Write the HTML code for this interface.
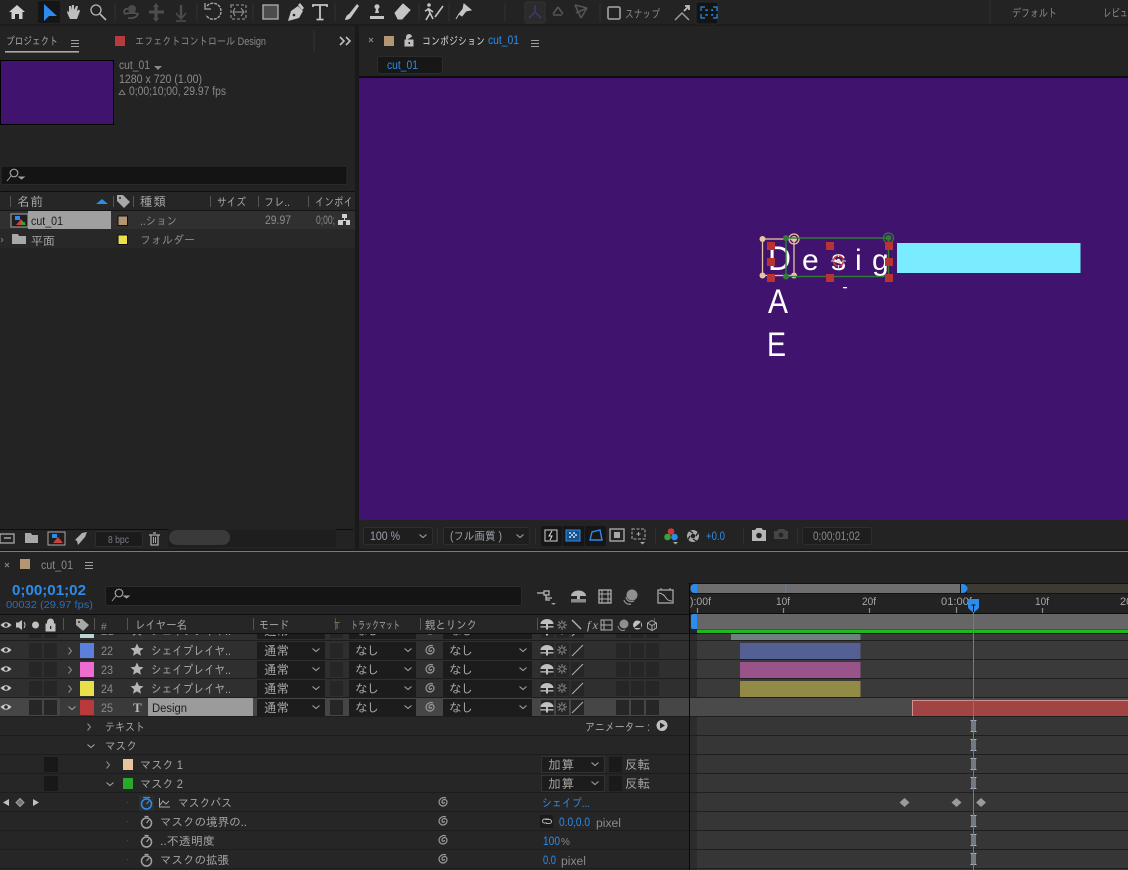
<!DOCTYPE html>
<html lang="ja"><head><meta charset="utf-8"><title>cut_01</title>
<style>
html,body{margin:0;padding:0;background:#232323;overflow:hidden}
svg{display:block}
text{font-family:"Liberation Sans","IPAGothic","Noto Sans CJK JP",sans-serif;font-size:11.5px;fill:#a6a6a6}
.b{fill:#2d8ceb}.d{fill:#8a8a8a}.k{fill:#1c1c1c}.w{fill:#d8d8d8}
.big{font-size:34px;fill:#fff}
.dim{fill:none;stroke:#555;stroke-width:1.6}
</style></head><body>
<svg xmlns="http://www.w3.org/2000/svg" width="1128" height="870" viewBox="0 0 1128 870">
<defs>
<g id="eye"><path d="M-5.5 0Q0-5.5 5.5 0Q0 5.5-5.5 0Z" fill="#c8c8c8"/><circle r="1.8" fill="#2a2a2a"/></g>
<g id="chd"><path d="M-3.5-1.5L0 1.5L3.5-1.5" fill="none" stroke="#a0a0a0" stroke-width="1.1"/></g>
<g id="chr"><path d="M-1.5-3.5L1.5 0L-1.5 3.5" fill="none" stroke="#8a8a8a" stroke-width="1.1"/></g>
<g id="star"><path d="M0-6.5L1.9-2.2 6.5-1.8 3 1.2 4 5.8 0 3.4-4 5.8-3 1.2-6.5-1.8-1.9-2.2Z" fill="#b5b5b5"/></g>
<g id="mush"><path d="M-6.5 0A6.5 5 0 0 1 6.5 0Z" fill="#c0c0c0"/><rect x="-1" y="0" width="2" height="5.5" fill="#c0c0c0"/><rect x="-6.5" y="2.2" width="13" height="1.3" fill="#c0c0c0"/></g>
<g id="sun"><circle r="2.3" fill="none" stroke="#8a8a8a"/><path d="M0-5V-3M0 3V5M-5 0H-3M3 0H5M-3.5-3.5L-2-2M3.5-3.5L2-2M-3.5 3.5L-2 2M3.5 3.5L2 2" stroke="#8a8a8a"/></g>
<g id="spi"><path d="M1.5 0A1.25 1.25 0 0 1 -1 0A2.5 2.5 0 0 1 4 0A4 4 0 0 1 -4 0A5 5 0 0 1 3 -4" fill="none" stroke="#9a9a9a" stroke-width="1.2"/></g>
<g id="sw"><circle cy="1" r="5" fill="none" stroke="#a0a0a0" stroke-width="1.5"/><path d="M-2-5.5H2M0 1L2.5-2" stroke="#a0a0a0" stroke-width="1.2"/></g>
<g id="ib"><path d="M-3-5.5H3M-3 5.5H3M-1.5-5.5V5.5M1.5-5.5V5.5" stroke="#a4b0be" stroke-width="1.1" fill="none"/></g>
<g id="kf"><path d="M0-4.5L5 0L0 4.5L-5 0Z" fill="#9a9a9a"/></g>
<g id="menu"><path d="M0 0.5H8M0 3.5H8M0 6.5H8" stroke="#a0a0a0"/></g>
<g id="sq"><rect x="-4" y="-4" width="8" height="8" fill="#b83434"/></g>
<g id="tn"><circle r="3" fill="#e8c39e"/></g>
<g id="gn"><circle r="3" fill="#2f7d34"/></g>
<g id="rowchrome">
<rect x="29" y="2" width="13" height="15" fill="#262626"/><rect x="44" y="2" width="13" height="15" fill="#262626"/>
<rect x="257" y="1" width="68" height="17" fill="#1c1c1c"/><rect x="330" y="2" width="13" height="15" fill="#262626"/>
<rect x="349" y="1" width="67" height="17" fill="#1c1c1c"/><rect x="443" y="1" width="89" height="17" fill="#1c1c1c"/>
<use href="#chd" x="316" y="9"/><use href="#chd" x="408" y="9"/><use href="#chd" x="523" y="9"/>
<use href="#spi" x="430" y="9"/>
<rect x="541" y="2" width="13" height="15" fill="#262626"/><rect x="556" y="2" width="13" height="15" fill="#262626"/><rect x="571" y="2" width="13" height="15" fill="#262626"/>
<use href="#mush" x="547" y="9"/><use href="#sun" x="562" y="9"/><path d="M572 15L583 4" stroke="#b0b0b0" stroke-width="1.1"/>
<rect x="616" y="2" width="13" height="15" fill="#262626"/><rect x="631" y="2" width="13" height="15" fill="#262626"/><rect x="646" y="2" width="13" height="15" fill="#262626"/>
</g>
</defs>

<!-- base -->
<rect width="1128" height="870" fill="#232323"/>
<!-- top toolbar -->
<rect y="24" width="1128" height="2" fill="#1b1b1b"/>
<path d="M9 12L17 5L25 12H22.5V19H19V14H15V19H11.5V12Z" fill="#cfcfcf"/>
<rect x="38" y="1" width="22" height="22" rx="2" fill="#151515"/>
<path d="M44 4V21L49 16L57 16Z" fill="#2d8ceb"/>
<path d="M70 19Q67 13 67 11L69 12V6H71V10L72 5H74V10L76 6H78L77 11L79 9.5L80 11L77 19Z" fill="#bdbdbd"/>
<circle cx="96" cy="10" r="5" fill="none" stroke="#b5b5b5" stroke-width="1.3"/><path d="M100 14L106 20" stroke="#b5b5b5" stroke-width="1.6"/>
<path d="M115 3V22M197 3V22M253 3V22M335 3V22M419 3V22M449 3V22M505 3V22M600 3V22M990 0V24" stroke="#2f2f2f" stroke-width="1.3"/>
<circle cx="132" cy="9" r="4" fill="#4a4a4a"/><path d="M124 13Q124 8 128 9M128 18Q136 19 138 14Q134 12 124 14" class="dim"/>
<path d="M156 5V20M149 12H164" stroke="#4d4d4d" stroke-width="3"/><path d="M153 7L156 3L159 7M153 18L156 22L159 18" fill="#4d4d4d"/>
<path d="M181 5V17" stroke="#4d4d4d" stroke-width="2.5"/><path d="M176 13L181 19L186 13M176 21H186" fill="none" stroke="#4d4d4d" stroke-width="1.5"/>
<path d="M207 6A8 8 0 1 1 206 15" fill="none" stroke="#a6a6a6" stroke-width="1.4" stroke-dasharray="3 1"/><path d="M205 3V9H211" fill="none" stroke="#a6a6a6" stroke-width="1.3"/>
<rect x="231" y="5" width="15" height="14" fill="none" stroke="#a0a0a0" stroke-dasharray="3 2"/><path d="M234 12H243M235 8L233 12L235 16M241 8L244 12L241 16" stroke="#a0a0a0" fill="none"/>
<rect x="263" y="5" width="15" height="14" fill="#4c4c4c" stroke="#b3b3b3" stroke-width="1.3"/>
<path d="M288 21L291 11L298 6L303 11L299 18ZM298 5L300 3L304 8L302 10" fill="#c5c5c5"/><circle cx="294" cy="15" r="1.3" fill="#232323"/>
<path d="M313 7V5H327V7M320 5V19M316.5 19.5H323.5" fill="none" stroke="#c5c5c5" stroke-width="1.8"/>
<path d="M345 20Q346 15 349 14L357 4L359 6L352 16Q350 20 345 20Z" fill="#c5c5c5"/>
<path d="M370 16H384V19H370ZM375 13L376 9A2.5 2.5 0 1 1 378 9L379 13Z" fill="#c5c5c5"/>
<path d="M395 13L403 4L410 10L402 19H398Z" fill="#c5c5c5" stroke="#c5c5c5"/>
<circle cx="429" cy="5" r="1.8" fill="#c5c5c5"/><path d="M428 8L430 13L426 20M430 13L433 19M425 11L429 9L433 12M435 17L443 6" stroke="#c5c5c5" stroke-width="1.6" fill="none"/>
<path d="M464 4L471 10L466 11L462 16L459 14L463 9ZM459 14L456 19" fill="#c5c5c5" stroke="#c5c5c5"/>
<rect x="525" y="2" width="20" height="21" rx="2" fill="#2b2b2b" stroke="#333"/>
<path d="M535 12V5M535 12L529 18M535 12L541 18" stroke="#3c3c78" stroke-width="1.3"/>
<path d="M553 14L558 7M558 7L563 14M553 15H562" class="dim"/>
<path d="M575 5L581 18M576 13L587 8M575 5L587 8M581 18L587 8" class="dim"/>
<rect x="608" y="7" width="12" height="12" rx="1.5" fill="none" stroke="#969696" stroke-width="1.8"/>
<text x="625" y="18" textLength="35" lengthAdjust="spacingAndGlyphs" class="d">スナップ</text>
<path d="M675 20L682 13L689 20" fill="none" stroke="#9a9a9a" stroke-width="1.5"/><path d="M684 11L689 6M685 6H689V10" stroke="#bdbdbd" stroke-width="1.8" fill="none"/>
<rect x="696" y="2" width="22" height="22" rx="2" fill="#141414" stroke="#2a2a2a"/>
<path d="M701 11V7H705M713 7H717V11M701 14V18H705M713 18H717V14M706 11V10H708M711 10H712.5V11M706 14V15H708M711 15H712.5V14" fill="none" stroke="#2d8ceb" stroke-width="1.2"/>
<text x="1012" y="17" textLength="45" lengthAdjust="spacingAndGlyphs" class="d">デフォルト</text>
<text x="1103" y="17" textLength="25" lengthAdjust="spacingAndGlyphs" class="d">レビュ</text>

<!-- panel divider -->
<rect x="355" y="26" width="4" height="523" fill="#1a1a1a"/>

<!-- project panel tabs -->
<text x="6" y="45" textLength="52" lengthAdjust="spacingAndGlyphs" style="font-size:11px">プロジェクト</text>
<rect x="5" y="51" width="74" height="1.6" fill="#aaa"/>
<use href="#menu" x="71" y="40"/>
<rect x="115" y="36" width="10" height="10" fill="#b83a3a"/>
<text x="135" y="45" textLength="131" lengthAdjust="spacingAndGlyphs" class="d" style="font-size:11px">エフェクトコントロール Design</text>
<path d="M314 30V52" stroke="#333"/>
<path d="M340 37L344 41L340 45M346 37L350 41L346 45" fill="none" stroke="#bdbdbd" stroke-width="1.6"/>

<!-- project info -->
<rect x="0.5" y="60.5" width="113" height="64" fill="#40146e" stroke="#000"/>
<text x="119" y="69" class="d" textLength="31" lengthAdjust="spacingAndGlyphs">cut_01</text><path d="M154 66H162L158 70Z" fill="#8a8a8a"/>
<text x="119" y="83" class="d" textLength="83" lengthAdjust="spacingAndGlyphs">1280 x 720 (1.00)</text>
<path d="M119 94.5L122 90L125 94.5Z" fill="none" stroke="#8a8a8a" stroke-width=".8"/>
<text x="129" y="95" class="d" textLength="97" lengthAdjust="spacingAndGlyphs">0;00;10;00, 29.97 fps</text>

<!-- project search -->
<rect x="1" y="166" width="346" height="18.5" rx="2" fill="#141414" stroke="#2b2b2b"/>
<circle cx="14" cy="173" r="3.8" fill="none" stroke="#a0a0a0" stroke-width="1.2"/><path d="M11 176L7 181M19 177H24L21.5 179Z" stroke="#a0a0a0" fill="#a0a0a0"/>

<!-- project list -->
<rect y="191" width="355" height="1" fill="#0f0f0f"/>
<rect y="192" width="355" height="18" fill="#262626"/>
<rect y="210" width="355" height="1" fill="#151515"/>
<rect y="211" width="355" height="18" fill="#303030"/>
<rect y="229" width="355" height="19" fill="#282828"/>
<path d="M10.5 196V207M113.5 196V207M133.5 196V207M210.5 196V207M258.5 196V207M308.5 196V207" stroke="#555"/>
<text x="17" y="206" textLength="26" style="font-size:12.5px">名前</text>
<path d="M96 204L102 199L108 204Z" fill="#2d8ceb"/>
<path d="M117 195H123L130 202L124 208L117 201Z" fill="#a8a8a8"/><circle cx="120" cy="198" r="1" fill="#262626"/>
<text x="140" y="206" textLength="26" style="font-size:12.5px">種類</text>
<text x="217" y="206" textLength="29" lengthAdjust="spacingAndGlyphs">サイズ</text>
<text x="264" y="206" textLength="26" lengthAdjust="spacingAndGlyphs">フレ..</text>
<text x="315" y="206" textLength="38" lengthAdjust="spacingAndGlyphs">インポイ</text>
<rect x="11" y="214" width="17" height="13" fill="#1e1e1e" stroke="#a8a8a8"/><rect x="15" y="216" width="5" height="4" fill="#2d8ceb"/><path d="M16 225L21 219L26 225Z" fill="#cc4040"/><rect x="21" y="222" width="4" height="3" fill="#3aa03a"/>
<rect x="28" y="211" width="83" height="18" fill="#a0a0a0"/>
<text x="31" y="225" class="k" textLength="32" lengthAdjust="spacingAndGlyphs">cut_01</text>
<rect x="118" y="216" width="9.5" height="9.5" fill="#b39672" stroke="#111"/>
<text x="140" y="225" class="d" textLength="37" lengthAdjust="spacingAndGlyphs">..ション</text>
<text x="265" y="224" class="d" textLength="26" lengthAdjust="spacingAndGlyphs">29.97</text>
<text x="316" y="224" class="d" textLength="19" lengthAdjust="spacingAndGlyphs">0;00;</text>
<path d="M342 214H347V218H345V220H350V225H346V221H343V225H338V220H344V218H342Z" fill="#cfcfcf"/>
<path d="M1 238L3 240L1 242" fill="none" stroke="#777"/>
<path d="M12 234H18L19 236H26V244H12Z" fill="#a8a8a8"/>
<text x="31" y="245" textLength="24" style="font-size:12px">平面</text>
<rect x="118" y="235" width="9.5" height="9.5" fill="#e9df4a" stroke="#111"/>
<text x="140" y="244" class="d" textLength="55" lengthAdjust="spacingAndGlyphs">フォルダー</text>

<!-- project footer -->
<rect y="529" width="168" height="1" fill="#0d0d0d"/><rect x="336" y="529" width="17" height="1" fill="#0d0d0d"/>
<rect x="168" y="530" width="168" height="17" fill="#1e1e1e"/>
<rect x="0" y="534" width="14" height="9" fill="none" stroke="#a8a8a8" stroke-width="1.3"/><path d="M4 538H11" stroke="#a8a8a8" stroke-width="1.5"/>
<path d="M25 533H31L32 535H38V543H25Z" fill="#a8a8a8"/>
<rect x="48" y="532" width="17" height="13" fill="#1e1e1e" stroke="#a8a8a8"/><rect x="52" y="534" width="5" height="4" fill="#2d8ceb"/><path d="M53 543L58 537L63 543Z" fill="#cc4040"/>
<path d="M75 540L82 533L87 532L85 537L78 545L77 541Z" fill="#b0b0b0"/>
<rect x="95.5" y="531.5" width="47" height="15" rx="2" fill="#1b1b1b" stroke="#2e2e2e"/>
<text x="108" y="543" textLength="21" lengthAdjust="spacingAndGlyphs" style="font-size:10px;fill:#7c7c8a">8 bpc</text>
<path d="M149 535H160M151 535V545H158V535M153 533H156" fill="none" stroke="#a8a8a8" stroke-width="1.3"/><path d="M153.5 537V543M155.5 537V543" stroke="#a8a8a8"/>
<rect x="169" y="530" width="61" height="15" rx="7.5" fill="#3a3a3a"/>

<!-- comp tabs -->
<path d="M369 38L373 42M373 38L369 42" stroke="#888"/>
<rect x="384" y="36" width="10" height="10" fill="#b39672"/>
<path d="M405 40H413V46H405ZM406.5 40V37A2.5 2.5 0 0 1 411.5 37" fill="#bdbdbd" stroke="#bdbdbd"/><rect x="408.5" y="42" width="1.5" height="2" fill="#232323"/>
<text x="422" y="45" textLength="63" lengthAdjust="spacingAndGlyphs" class="w" style="font-size:11px">コンポジション</text>
<text x="488" y="44" textLength="31" lengthAdjust="spacingAndGlyphs" class="b">cut_01</text>
<use href="#menu" x="531" y="40"/>
<rect x="377.5" y="56.5" width="65" height="17" rx="2" fill="#171717" stroke="#2b2b2b"/>
<text x="387" y="69" textLength="31" lengthAdjust="spacingAndGlyphs" class="b">cut_01</text>
<rect x="359" y="76" width="769" height="2" fill="#0c0c0c"/>

<!-- viewer -->
<rect x="359" y="78" width="769" height="442" fill="#40146e"/>
<rect x="897" y="243" width="183.5" height="30" fill="#7aecff"/>
<text x="768" y="270" class="big" textLength="23" lengthAdjust="spacingAndGlyphs">D</text>
<text x="802" y="270" class="big" style="font-size:30px">e</text>
<text x="831" y="270" class="big" style="font-size:30px">s</text>
<text x="855" y="270" class="big" style="font-size:30px">i</text>
<text x="872" y="270" class="big" style="font-size:30px">g</text>
<text x="768" y="313" class="big" textLength="20" lengthAdjust="spacingAndGlyphs">A</text>
<text x="767" y="356" class="big" textLength="19" lengthAdjust="spacingAndGlyphs">E</text>
<rect x="843" y="287" width="4" height="1.3" fill="#fff"/>
<rect x="762.5" y="239" width="31.5" height="36.5" fill="none" stroke="#e8c39e" stroke-width="1.3"/>
<use href="#tn" x="762.5" y="239"/><use href="#tn" x="762.5" y="275.5"/><use href="#tn" x="794" y="275.5"/><use href="#tn" x="794" y="239"/>
<circle cx="794" cy="239" r="5" fill="none" stroke="#e8c39e" stroke-width="1.3"/>
<rect x="786" y="238" width="102.5" height="38.5" fill="none" stroke="#2f7d34" stroke-width="1.4"/>
<use href="#gn" x="786" y="238"/><use href="#gn" x="786" y="276.5"/><use href="#gn" x="888.5" y="238"/>
<circle cx="888.5" cy="238" r="5" fill="none" stroke="#2f7d34" stroke-width="1.3"/>
<use href="#sq" x="771" y="246"/><use href="#sq" x="830" y="246"/><use href="#sq" x="889" y="246"/>
<use href="#sq" x="771" y="262"/><use href="#sq" x="889" y="262"/>
<use href="#sq" x="771" y="278"/><use href="#sq" x="830" y="278"/><use href="#sq" x="889" y="278"/>
<circle cx="838.5" cy="261" r="5" fill="none" stroke="#c83a3a" stroke-width="1.6"/><circle cx="838.5" cy="261" r="2.2" fill="#ddd"/>
<path d="M831 261H835M842 261H846M838.5 254V257M838.5 265V268" stroke="#e0d0d0"/>

<!-- comp footer -->
<rect x="359" y="520" width="769" height="29" fill="#232323"/>
<rect x="363.5" y="527.5" width="69" height="17" rx="2" fill="#1e1e1e" stroke="#2e2e2e"/>
<text x="370" y="540" textLength="30" lengthAdjust="spacingAndGlyphs" style="fill:#9aa0aa">100 %</text><use href="#chd" x="423" y="536"/>
<path d="M437.5 528V544M535.5 528V544M655.5 528V544M743.5 528V544M797.5 528V544" stroke="#303030"/>
<rect x="443.5" y="527.5" width="86" height="17" rx="2" fill="#1e1e1e" stroke="#2e2e2e"/>
<text x="450" y="540" textLength="52" lengthAdjust="spacingAndGlyphs" style="fill:#9aa0aa">(フル画質 )</text><use href="#chd" x="520" y="536"/>
<rect x="541" y="526" width="21" height="20" rx="2" fill="#161616"/>
<rect x="545" y="530" width="12" height="11" fill="none" stroke="#b5b5b5" stroke-width="1.2"/><path d="M552 531L549 536H552L550 540" stroke="#dcdcdc" fill="none"/>
<rect x="563" y="526" width="21" height="20" rx="2" fill="#161616"/>
<rect x="566" y="530" width="14" height="11" fill="#1d4f82" stroke="#2d8ceb"/><path d="M569 532H571V534H569ZM573 532H575V534H573ZM571 534H573V536H571ZM575 534H577V536H575ZM569 536H571V538H569ZM573 536H575V538H573Z" fill="#8fc4f5"/>
<rect x="585" y="526" width="21" height="20" rx="2" fill="#161616"/>
<path d="M590 540L592 532L600 530L602 540Z" fill="none" stroke="#2d8ceb" stroke-width="1.4"/>
<rect x="610" y="529" width="14" height="12" fill="none" stroke="#a8a8a8" stroke-width="1.4"/><rect x="614" y="532" width="6" height="6" fill="#a8a8a8"/>
<rect x="632" y="529" width="13" height="10" fill="none" stroke="#a8a8a8" stroke-dasharray="3 1.5"/><path d="M638.5 532V536M636.5 534H640.5" stroke="#a8a8a8"/><path d="M640 542H645L642.5 544.5Z" fill="#a8a8a8"/>
<circle cx="671" cy="531.5" r="3.3" fill="#c83a3a"/><circle cx="667.5" cy="537" r="3.3" fill="#3aa03a"/><circle cx="674.5" cy="537" r="3.3" fill="#2d8ceb"/><path d="M673 542H678L675.5 544.5Z" fill="#a8a8a8"/>
<circle cx="693" cy="536" r="6" fill="#a8a8a8"/><path d="M693 533L688 530M696 536L699 531M693 539L698 542M690 536L687 541" stroke="#232323" stroke-width="1.3"/><circle cx="693" cy="536" r="2.3" fill="#232323"/>
<text x="706" y="540" textLength="19" lengthAdjust="spacingAndGlyphs" class="b">+0.0</text>
<path d="M752 530H755L756.5 528H761.5L763 530H766V541H752Z" fill="#b5b5b5"/><circle cx="759" cy="535.5" r="2.8" fill="#232323"/>
<path d="M774 531H777L779 529H784L786 531H788V539H774Z" fill="#454545"/><circle cx="781" cy="535" r="2.3" fill="#232323"/>
<rect x="802.5" y="527.5" width="69" height="17" rx="2" fill="#1e1e1e" stroke="#2e2e2e"/>
<text x="813" y="540" textLength="47" lengthAdjust="spacingAndGlyphs" style="fill:#8a8a8a">0;00;01;02</text>

<!-- divider & timeline panel -->
<rect y="549" width="1128" height="2" fill="#1a1a1a"/>
<rect y="551" width="1128" height="1" fill="#2d8ceb"/>
<path d="M5 563L9 567M9 563L5 567" stroke="#888"/>
<rect x="20" y="559" width="10" height="10" fill="#b39672"/>
<text x="41" y="569" textLength="32" lengthAdjust="spacingAndGlyphs" class="d">cut_01</text>
<use href="#menu" x="85" y="562"/>
<text x="12" y="595" textLength="74" lengthAdjust="spacingAndGlyphs" class="b" style="font-size:14.5px;font-weight:bold">0;00;01;02</text>
<text x="6" y="608" textLength="87" lengthAdjust="spacingAndGlyphs" style="fill:#2d6db5;font-size:10.5px">00032 (29.97 fps)</text>
<rect x="105.5" y="586.5" width="416" height="19" rx="2" fill="#141414" stroke="#2b2b2b"/>
<circle cx="119" cy="593" r="3.8" fill="none" stroke="#a0a0a0" stroke-width="1.2"/><path d="M116 596L112 601M124 596H129L126.5 598Z" stroke="#a0a0a0" fill="#a0a0a0"/>
<path d="M537 593H544M544 591H549V595H544ZM546 595V600H550M546 598H552" stroke="#bdbdbd" stroke-width="1.2" fill="none"/><path d="M551 603H556L553.5 605Z" fill="#a0a0a0"/>
<path d="M571 596A7.5 5.5 0 0 1 586 596Z" fill="#b5b5b5"/><rect x="577" y="596" width="3" height="5" fill="#b5b5b5"/><rect x="571" y="599" width="15" height="3.5" fill="#8a8a8a"/>
<rect x="599" y="590" width="12" height="13" fill="none" stroke="#b0b0b0" stroke-width="1.3"/><path d="M602 590V603M608 590V603M599 594H611M599 599H611" stroke="#b0b0b0"/>
<circle cx="632" cy="595" r="5.5" fill="#8f8f8f"/><path d="M626 597A5.5 5.5 0 0 0 634 601M624 600A5.5 5.5 0 0 0 631 604" fill="none" stroke="#8f8f8f" stroke-width="1.2"/>
<rect x="658" y="590" width="15" height="13" fill="none" stroke="#b0b0b0" stroke-width="1.2"/><path d="M659 593Q664 594 666 598Q668 601 672 601" fill="none" stroke="#b0b0b0"/><path d="M661 588V590M670 588V590" stroke="#b0b0b0"/>

<!-- timeline ruler -->
<rect x="690" y="583" width="438" height="31" fill="#232323"/>
<rect x="690" y="583" width="438" height="1" fill="#111"/>
<rect x="697" y="584" width="263" height="9" fill="#6e6e6e"/>
<rect x="967" y="584" width="161" height="9" fill="#3d3a33"/>
<path d="M697 584H694A4 4 0 0 0 690.5 588.5A4 4 0 0 0 694 593H697Z" fill="#2d8ceb"/>
<path d="M961 584H963A4.5 4.5 0 0 1 963 593H961Z" fill="#2d8ceb"/>
<rect x="960" y="584" width="1" height="9" fill="#111"/>
<rect x="785" y="584" width="1.5" height="9" fill="#5f7b9a"/>
<rect x="690" y="593" width="438" height="1" fill="#111"/>
<text x="690" y="605" textLength="21" lengthAdjust="spacingAndGlyphs" style="font-size:11px">):00f</text>
<text x="776" y="605" textLength="14" lengthAdjust="spacingAndGlyphs" style="font-size:11px">10f</text>
<text x="862" y="605" textLength="14" lengthAdjust="spacingAndGlyphs" style="font-size:11px">20f</text>
<text x="941" y="605" textLength="31" lengthAdjust="spacingAndGlyphs" style="font-size:11px">01:00f</text>
<text x="1035" y="605" textLength="14" lengthAdjust="spacingAndGlyphs" style="font-size:11px">10f</text>
<text x="1120" y="605" style="font-size:11px">20</text>
<path d="M697.5 608V613M783.5 608V613M869.5 608V613M956.5 607V613M1042.5 608V613" stroke="#8a8a8a" stroke-width="1.2"/>
<rect x="690" y="613" width="438" height="1" fill="#0d0d0d"/>
<rect x="690" y="614" width="7" height="15" fill="#232323"/>
<rect x="697" y="614" width="431" height="15" fill="#666"/>
<path d="M697 614H693A2 2 0 0 0 691 616V627A2 2 0 0 0 693 629H697Z" fill="#2d8ceb"/>
<rect x="697" y="629.5" width="431" height="3.5" fill="#1fb81f"/>

<!-- layer header -->
<rect y="614" width="689" height="1" fill="#0f0f0f"/>
<rect y="615" width="689" height="18" fill="#262626"/>
<rect y="633" width="1128" height="1.2" fill="#0f0f0f"/>
<rect x="689" y="583" width="1" height="287" fill="#0a0a0a"/>
<use href="#eye" x="6" y="625"/>
<path d="M16 622.5H18.5L22 620V630L18.5 627.5H16Z" fill="#c0c0c0"/><path d="M24 622Q26 625 24 628" fill="none" stroke="#c0c0c0"/>
<circle cx="35.5" cy="625" r="3.5" fill="#c0c0c0"/>
<path d="M46 624H55V631H46ZM47.5 624V622A3 3 0 0 1 53.5 622V624" fill="#c0c0c0" stroke="#c0c0c0"/><rect x="50" y="626" width="1.3" height="3" fill="#262626"/>
<path d="M76 619H82L89 625L83 631L76 625Z" fill="#a8a8a8"/><circle cx="79" cy="622" r="1" fill="#262626"/>
<text x="101" y="630" textLength="10" style="font-size:10px;fill:#8a8a8a">#</text>
<path d="M63.5 618V630M94.5 618V630M127.5 618V630M253.5 618V630M335.5 618V630M420.5 618V630M537.5 618V630M654.5 618V630" stroke="#555"/>
<text x="135" y="629" textLength="52" lengthAdjust="spacingAndGlyphs">レイヤー名</text>
<text x="259" y="629" textLength="30" lengthAdjust="spacingAndGlyphs">モード</text>
<text x="334" y="629" textLength="8" style="font-size:10px;fill:#8a7a5a">T</text>
<text x="351" y="629" textLength="49" lengthAdjust="spacingAndGlyphs" style="font-size:11px">トラックマット</text>
<text x="425" y="629" textLength="52" lengthAdjust="spacingAndGlyphs">親とリンク</text>
<use href="#mush" x="547" y="624"/><use href="#sun" x="562" y="625"/>
<path d="M572 620L581 629" stroke="#b5b5b5" stroke-width="1.3"/>
<text x="587" y="629" textLength="11" style="font-style:italic;font-family:'Liberation Serif',serif;font-size:12px;fill:#b5b5b5">fx</text>
<rect x="601" y="620" width="11" height="10" fill="none" stroke="#b0b0b0"/><path d="M604 620V630M601 625H612" stroke="#b0b0b0"/>
<circle cx="624" cy="624" r="4.5" fill="#8f8f8f"/><path d="M618 626A5 5 0 0 0 625 630" fill="none" stroke="#8f8f8f"/>
<circle cx="637.5" cy="625" r="4.5" fill="#c0c0c0"/><path d="M634 628L641 622V628Z" fill="#262626"/>
<path d="M652 620.5L656.5 623V628L652 630.5L647.5 628V623ZM647.5 623L652 625.5L656.5 623M652 625.5V630.5" fill="none" stroke="#a8a8a8"/>

<!-- layer rows left -->
<rect y="634" width="689" height="6.5" fill="#2f2f2f"/>
<rect y="641" width="689" height="18" fill="#2f2f2f"/>
<rect y="660" width="689" height="18" fill="#2f2f2f"/>
<rect y="679" width="689" height="18" fill="#2f2f2f"/>
<rect y="698" width="689" height="18" fill="#464646"/>
<path d="M0 640.5H689M0 659.5H689M0 678.5H689M0 697.5H689M0 716.5H689" stroke="#1d1d1d"/>
<rect x="0" y="717" width="689" height="153" fill="#262626"/>
<path d="M0 735.5H689M0 754.5H689M0 773.5H689M0 792.5H689M0 811.5H689M0 830.5H689M0 849.5H689M0 868.5H689" stroke="#1d1d1d"/>

<!-- partial row 21 -->
<svg x="0" y="634" width="689" height="6.5" overflow="hidden">
<g transform="translate(0,-13)"><use href="#rowchrome"/>
<rect x="80" y="2" width="14" height="15" fill="#b8d4d4"/><use href="#star" x="137" y="9"/>
<text x="151" y="14" textLength="80" lengthAdjust="spacingAndGlyphs" style="font-size:12px">シェイプレイヤ..</text>
<text x="101" y="14" class="d">21</text><text x="264" y="14" textLength="25" style="font-size:12.5px">通常</text><text x="355" y="14" textLength="24" style="font-size:12.5px">なし</text><text x="449" y="14" textLength="24" style="font-size:12.5px">なし</text>
</g></svg>

<!-- row 22 -->
<g transform="translate(0,641)"><use href="#rowchrome"/><use href="#eye" x="6" y="9"/><use href="#chr" x="70" y="10"/>
<rect x="80" y="2" width="14" height="15" fill="#5a7fdc"/><use href="#star" x="137" y="9"/>
<text x="101" y="14" class="d" textLength="12" lengthAdjust="spacingAndGlyphs">22</text>
<text x="151" y="14" textLength="80" lengthAdjust="spacingAndGlyphs" style="font-size:12px">シェイプレイヤ..</text>
<text x="264" y="14" textLength="25" style="font-size:12.5px">通常</text><text x="355" y="14" textLength="24" style="font-size:12.5px">なし</text><text x="449" y="14" textLength="24" style="font-size:12.5px">なし</text></g>
<!-- row 23 -->
<g transform="translate(0,660)"><use href="#rowchrome"/><use href="#eye" x="6" y="9"/><use href="#chr" x="70" y="10"/>
<rect x="80" y="2" width="14" height="15" fill="#ec6cd0"/><use href="#star" x="137" y="9"/>
<text x="101" y="14" class="d" textLength="12" lengthAdjust="spacingAndGlyphs">23</text>
<text x="151" y="14" textLength="80" lengthAdjust="spacingAndGlyphs" style="font-size:12px">シェイプレイヤ..</text>
<text x="264" y="14" textLength="25" style="font-size:12.5px">通常</text><text x="355" y="14" textLength="24" style="font-size:12.5px">なし</text><text x="449" y="14" textLength="24" style="font-size:12.5px">なし</text></g>
<!-- row 24 -->
<g transform="translate(0,679)"><use href="#rowchrome"/><use href="#eye" x="6" y="9"/><use href="#chr" x="70" y="10"/>
<rect x="80" y="2" width="14" height="15" fill="#e9df4a"/><use href="#star" x="137" y="9"/>
<text x="101" y="14" class="d" textLength="12" lengthAdjust="spacingAndGlyphs">24</text>
<text x="151" y="14" textLength="80" lengthAdjust="spacingAndGlyphs" style="font-size:12px">シェイプレイヤ..</text>
<text x="264" y="14" textLength="25" style="font-size:12.5px">通常</text><text x="355" y="14" textLength="24" style="font-size:12.5px">なし</text><text x="449" y="14" textLength="24" style="font-size:12.5px">なし</text></g>
<!-- row 25 -->
<g transform="translate(0,698)"><rect x="60" y="0" width="88" height="18" fill="#3a3a3a"/><use href="#rowchrome"/><use href="#eye" x="6" y="9"/><use href="#chd" x="72" y="10"/>
<rect x="80" y="2" width="14" height="15" fill="#b83a3a"/>
<text x="133" y="14" style="font-family:'Liberation Serif',serif;font-weight:bold;font-size:13px;fill:#b5b5b5">T</text>
<text x="101" y="14" class="d" textLength="12" lengthAdjust="spacingAndGlyphs">25</text>
<rect x="148" y="0" width="105" height="18" fill="#9b9b9b"/>
<text x="152" y="14" textLength="35" lengthAdjust="spacingAndGlyphs" class="k">Design</text>
<text x="264" y="14" textLength="25" style="font-size:12.5px">通常</text><text x="355" y="14" textLength="24" style="font-size:12.5px">なし</text><text x="449" y="14" textLength="24" style="font-size:12.5px">なし</text></g>

<!-- property rows -->
<use href="#chr" x="89" y="727"/>
<text x="105" y="731" textLength="40" lengthAdjust="spacingAndGlyphs">テキスト</text>
<text x="585" y="731" textLength="65" lengthAdjust="spacingAndGlyphs">アニメーター :</text>
<circle cx="662" cy="725.5" r="5.5" fill="#c0c0c0"/><path d="M660 722.5L665 725.5L660 728.5Z" fill="#262626"/>
<use href="#chd" x="91" y="746"/>
<text x="105" y="750" textLength="32" lengthAdjust="spacingAndGlyphs">マスク</text>
<rect x="44" y="757" width="14" height="15" fill="#181818"/>
<use href="#chr" x="108" y="765"/>
<rect x="123" y="759" width="10" height="11" fill="#e8c39e"/>
<text x="140" y="769" textLength="43" lengthAdjust="spacingAndGlyphs">マスク 1</text>
<rect x="541.5" y="756.5" width="63" height="16" fill="#1c1c1c" stroke="#333"/>
<text x="548" y="769" textLength="26" style="font-size:12.5px">加算</text><use href="#chd" x="595" y="764"/>
<rect x="609" y="757" width="13" height="15" fill="#1a1a1a"/>
<text x="625" y="769" textLength="25" style="font-size:12.5px">反転</text>

<rect x="44" y="776" width="14" height="15" fill="#181818"/>
<use href="#chd" x="110" y="784"/>
<rect x="123" y="778" width="10" height="11" fill="#2ba82b"/>
<text x="140" y="788" textLength="43" lengthAdjust="spacingAndGlyphs">マスク 2</text>
<rect x="541.5" y="775.5" width="63" height="16" fill="#1c1c1c" stroke="#333"/>
<text x="548" y="788" textLength="26" style="font-size:12.5px">加算</text><use href="#chd" x="595" y="783"/>
<rect x="609" y="776" width="13" height="15" fill="#1a1a1a"/>
<text x="625" y="788" textLength="25" style="font-size:12.5px">反転</text>

<path d="M9 799V806L3 802.5Z" fill="#c0c0c0"/>
<path d="M20 798.5L24 802.5L20 806.5L16 802.5Z" fill="#777" stroke="#a0a0a0"/>
<path d="M33 799V806L39 802.5Z" fill="#c0c0c0"/>
<circle cx="127.5" cy="802.5" r=".8" fill="#444"/><circle cx="127.5" cy="821.5" r=".8" fill="#444"/><circle cx="127.5" cy="840.5" r=".8" fill="#444"/><circle cx="127.5" cy="859.5" r=".8" fill="#444"/>
<rect x="139" y="795" width="15" height="16" fill="#2d2d2d"/>
<circle cx="146.5" cy="804" r="5" fill="none" stroke="#2d8ceb" stroke-width="1.5"/><path d="M143 797.5H150M146.5 804L149 801" stroke="#2d8ceb" stroke-width="1.2"/>
<path d="M159.5 798V807H170M160 805L163 801L166 804L169 801" fill="none" stroke="#a8a8a8"/>
<text x="178" y="807" textLength="54" lengthAdjust="spacingAndGlyphs">マスクパス</text>
<use href="#sw" x="146.5" y="822"/>
<text x="160" y="826" textLength="87" lengthAdjust="spacingAndGlyphs">マスクの境界の..</text>
<use href="#sw" x="146.5" y="841"/>
<text x="160" y="845" textLength="55" lengthAdjust="spacingAndGlyphs">..不透明度</text>
<use href="#sw" x="146.5" y="860"/>
<text x="160" y="864" textLength="69" lengthAdjust="spacingAndGlyphs">マスクの拡張</text>

<use href="#spi" x="443" y="802"/><use href="#spi" x="443" y="821"/><use href="#spi" x="443" y="840"/><use href="#spi" x="443" y="859"/>
<text x="542" y="807" textLength="48" lengthAdjust="spacingAndGlyphs" class="b">シェイプ...</text>
<rect x="540" y="815" width="13" height="13" fill="#1a1a1a"/>
<path d="M549 821H544.5A2 2 0 0 0 544.5 825H547M545 821.5H549.5A2 2 0 0 1 549.5 825.5H546" fill="none" stroke="#b0b0b0" stroke-width="1.1" transform="translate(0,-2)"/>
<text x="559" y="826" textLength="31" lengthAdjust="spacingAndGlyphs" class="b">0.0,0.0</text>
<text x="596" y="827" textLength="25" lengthAdjust="spacingAndGlyphs" class="d">pixel</text>
<text x="543" y="845" textLength="17" lengthAdjust="spacingAndGlyphs" class="b">100</text><text x="561" y="845" class="d" style="font-size:10px">%</text>
<text x="543" y="864" textLength="13" lengthAdjust="spacingAndGlyphs" class="b">0.0</text>
<text x="561" y="865" textLength="25" lengthAdjust="spacingAndGlyphs" class="d">pixel</text>

<!-- timeline rows -->
<rect x="690" y="634" width="7" height="236" fill="#2c2c2c"/>
<rect x="697" y="634" width="431" height="64" fill="#3a3a3a"/>
<rect x="690" y="698" width="438" height="18" fill="#4a4a4a"/>
<rect x="697" y="717" width="431" height="153" fill="#363636"/>
<path d="M690 640.5H1128M690 659.5H1128M690 678.5H1128M690 697.5H1128M690 716.5H1128M690 735.5H1128M690 754.5H1128M690 773.5H1128M690 792.5H1128M690 811.5H1128M690 830.5H1128M690 849.5H1128M690 868.5H1128" stroke="#1f1f1f"/>
<rect x="731" y="634" width="129.5" height="6" fill="#6f8080"/>
<rect x="740" y="643" width="120.5" height="16" fill="#545f94"/>
<rect x="740" y="662" width="120.5" height="16" fill="#985489"/>
<rect x="740" y="681" width="120.5" height="16" fill="#918b47"/>
<rect x="912" y="700" width="216" height="16" fill="#a34444"/>
<path d="M912.5 716V700.5H1128" fill="none" stroke="#d09090"/>

<!-- keyframes & playhead -->
<use href="#kf" x="904.5" y="802.5"/><use href="#kf" x="956.5" y="802.5"/><use href="#kf" x="981" y="802.5"/>
<use href="#ib" x="973.5" y="726"/><use href="#ib" x="973.5" y="745"/><use href="#ib" x="973.5" y="764"/><use href="#ib" x="973.5" y="783"/><use href="#ib" x="973.5" y="821"/><use href="#ib" x="973.5" y="840"/><use href="#ib" x="973.5" y="859"/>
<rect x="973" y="612" width="1" height="258" fill="#2d8ceb"/>
<path d="M968 599H979V608L973.5 613L968 608Z" fill="#2d8ceb"/>
<path d="M971.5 605H975.5M973.5 605V612" stroke="#111"/>
</svg>
</body></html>
